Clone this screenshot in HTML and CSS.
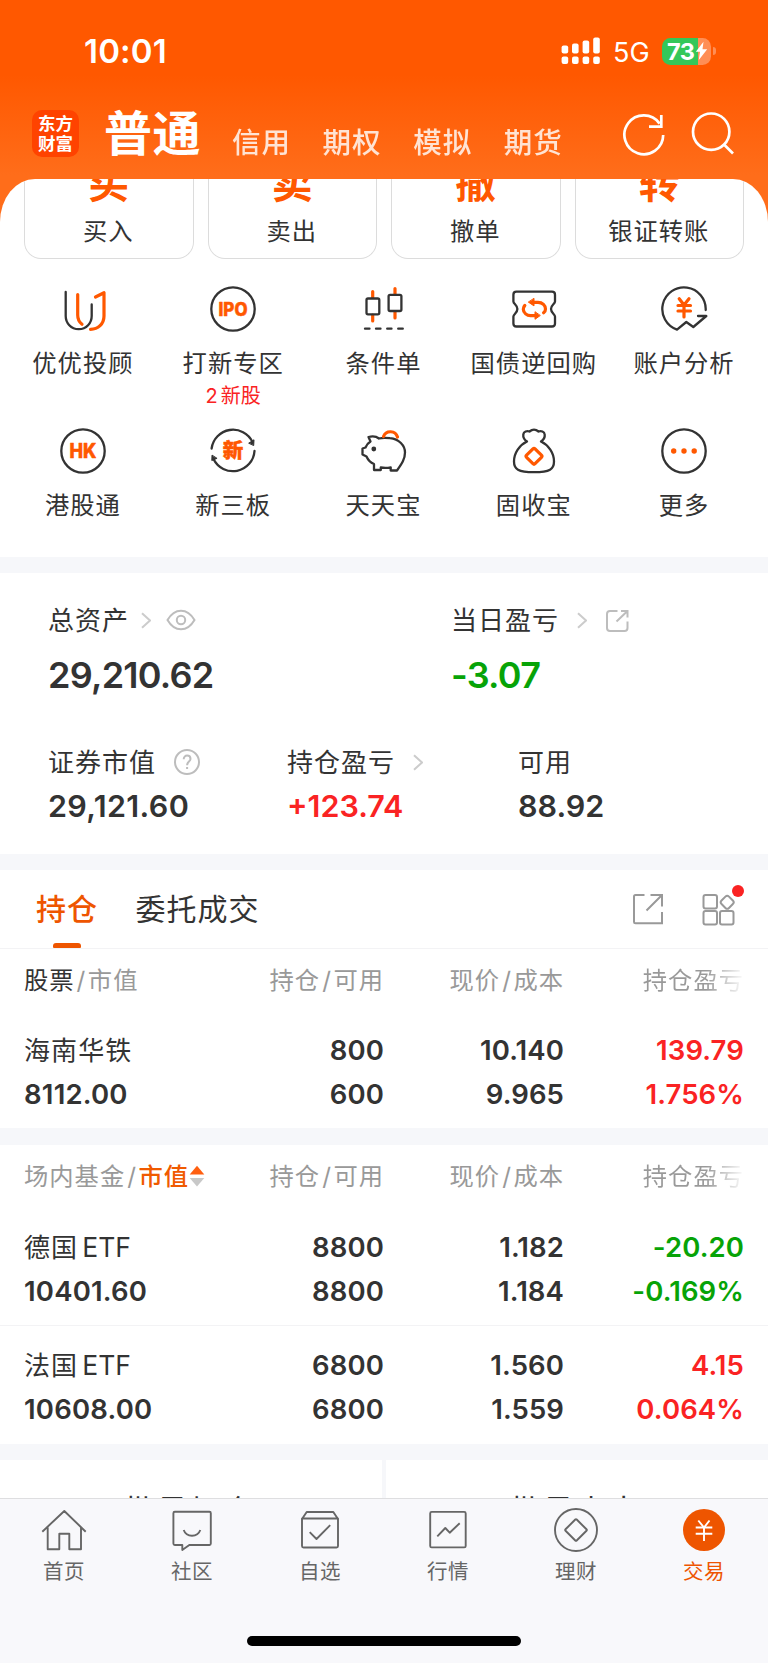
FILE: index.html
```html
<!DOCTYPE html>
<html lang="zh-CN">
<head>
<meta charset="utf-8">
<title>交易</title>
<link rel="stylesheet" href="styles.css">
</head>
<body>
<div class="app">
  <header class="top">
    <div class="status">
      <span class="time">10:01</span>
      <svg class="signal" width="40" height="28" viewBox="0 0 40 28" fill="#fff"><rect x="0.6" y="8.5" width="6.6" height="8" rx="2"/><rect x="11" y="6.500" width="6.600" height="10" rx="2"/><rect x="21.600" y="3.500" width="6.600" height="13" rx="2"/><rect x="32.200" y="0.500" width="6.600" height="16" rx="2"/><rect x="0.600" y="19.600" width="6.600" height="7.400" rx="2"/><rect x="11" y="19.600" width="6.600" height="7.400" rx="2"/><rect x="21.600" y="19.600" width="6.600" height="7.400" rx="2"/><rect x="32.200" y="19.600" width="6.600" height="7.400" rx="2"/></svg>
      <span class="net">5G</span>
      <span class="battery"><span class="pct">73</span><svg width="13" height="20" viewBox="0 0 13 20"><path d="M8.500 0.800L0.800 10.800H5L3.800 19L12.200 8.200H7.500Z" fill="#fff"/></svg></span><span class="battery-tip"></span>
    </div>
    <nav class="accounts">
      <span class="logo"><span>东方</span><span>财富</span></span>
      <span class="account-on">普通</span>
      <span class="account">信用</span><span class="account">期权</span><span class="account">模拟</span><span class="account">期货</span>
      <svg class="refresh" width="46" height="46" viewBox="0 0 46 46" fill="none" stroke="#fff" stroke-width="2.700"><path d="M42.200 23A19.400 19.400 0 1 1 38.600 11.600M40.300 3V14.700H28"/></svg>
      <svg width="46" height="46" viewBox="0 0 46 46" fill="none" stroke="#fff" stroke-width="2.700"><circle cx="21.200" cy="19.700" r="18.200"/><path d="M33.500 32L43 41.500"/></svg>
    </nav>
  </header>

  <main class="sheet">
    <section class="cards">
      <div class="card"><b>买</b><span>买入</span></div>
      <div class="card"><b>卖</b><span>卖出</span></div>
      <div class="card"><b>撤</b><span>撤单</span></div>
      <div class="card"><b>转</b><span>银证转账</span></div>
    </section>

    <section class="tools">
      <div class="tool">
        <svg class="ico" viewBox="0 0 48 48"><path d="M6.700 7V31C6.700 38 12 44.200 19.700 44.200S32.700 38 32.700 31V19.500"/><g class="o"><path d="M18.700 9.500V30C18.700 34.500 20 37 23 39.300M36.500 12L45 7.700V31C45 39 39 44.300 31.500 44.300"/></g></svg>
        <span>优优投顾</span></div>
      <div class="tool">
        <svg class="ico" viewBox="0 0 48 48"><circle cx="24" cy="24" r="21.700"/><text class="word" x="24" y="30.700" font-size="18.600" textLength="29" lengthAdjust="spacingAndGlyphs">IPO</text></svg>
        <span>打新专区</span><em><i>2</i>新股</em></div>
      <div class="tool">
        <svg class="ico" viewBox="0 0 48 48"><g class="o"><path d="M13.700 6.500V12.500M13.700 30V36M36 3.500V9M36 27V33"/></g><rect x="7.500" y="13.500" width="12.800" height="15.800" rx="1.500"/><rect x="29.600" y="9.800" width="12.800" height="16.200" rx="1.500"/><path d="M6 43.700H10.500M17 43.700H21.500M28.200 43.700H32.500M39.200 43.700H43.800"/></svg>
        <span>条件单</span></div>
      <div class="tool">
        <svg class="ico" viewBox="0 0 48 48"><path d="M6.400 6.700H42Q45 6.700 45 9.700V16.500C45 19 41 20 41 24S45 29 45 31.500V38.500Q45 41.500 42 41.500H6.400Q3.400 41.500 3.400 38.500V31.500C3.400 29 7.400 28 7.400 24S3.400 19 3.400 16.500V9.700Q3.400 6.700 6.400 6.700Z"/><g class="o"><path d="M22 17.300H28C32.500 17.300 35.500 20.500 35.500 24Q35.500 26.300 33.600 27.800M14.800 20.500Q13.300 22 13.300 24.300C13.300 28 17 30.700 20.500 30.700H26"/><path class="of" d="M24 13.700V20.900L18.600 17.300ZM25 27.100V34.300L30 30.700Z"/></g></svg>
        <span>国债逆回购</span></div>
      <div class="tool">
        <svg class="ico" viewBox="0 0 48 48"><path d="M45.700 25A21.700 21.700 0 1 0 17 44.600L26.300 37L33.300 42L46.300 31H38"/><g class="o"><path d="M19.200 13.700L24 20L29 13.700M24 20V32M18 20.500H30.500M18 26H30.500"/></g></svg>
        <span>账户分析</span></div>
      <div class="tool">
        <svg class="ico" viewBox="0 0 48 48"><circle cx="24" cy="24" r="21.700"/><text class="word" x="24" y="31" font-size="19.500" textLength="27" lengthAdjust="spacingAndGlyphs">HK</text></svg>
        <span>港股通</span></div>
      <div class="tool">
        <svg class="ico" viewBox="0 0 48 48"><path d="M2.600 21.500A21.600 21.600 0 0 1 43.500 15M45.500 24A21.600 21.600 0 0 1 4.500 32"/><path class="df" d="M40 16L45 12.800L44.700 18.200ZM3 28.500L2.800 33.500L7.700 31.500Z"/><text class="word" x="24" y="31.400" font-size="20.500">新</text></svg>
        <span>新三板</span></div>
      <div class="tool">
        <svg class="ico" viewBox="0 0 48 48"><path d="M9.500 10C13 9 17.500 9.500 20 11.500C23 10.700 27 10.700 31 11.200C40 12 46 18.500 46 25.500C46 32 43 36.500 38 43.500H31.700V40.300C28.500 41 25 41 21.800 40.500V43H15V37C11.500 35.500 9 33 7.500 29.500L3.500 27.500V21.500L6.500 20.500C7.500 18 9 16 11.500 14.500Z"/><circle cx="14.800" cy="22" r="2.400" class="df0"/><g class="o"><path d="M24.500 9.500A7.400 7.400 0 0 1 38.500 10"/></g></svg>
        <span>天天宝</span></div>
      <div class="tool">
        <svg class="ico" viewBox="0 0 48 48"><path d="M17 14.500C14 12.500 13 10 13.300 7.500C13.600 4.500 17 3.500 19.500 4.500Q21.700 2.700 24 2.700T28.500 4.500C31 3.500 34.400 4.500 34.700 7.500C35 10 34 12.500 31 14.500C38.500 18 44 26 44 34.500C44 42 40 45.200 24 45.200S4 42 4 34.500C4 26 9.500 18 17 14.500Z"/><g class="o"><rect x="18" y="23.300" width="12" height="12" rx="1.500" transform="rotate(45 24 29.300)"/></g></svg>
        <span>固收宝</span></div>
      <div class="tool">
        <svg class="ico" viewBox="0 0 48 48"><circle cx="24" cy="24" r="21.700"/><g class="dots"><circle cx="13.700" cy="24" r="2.700"/><circle cx="24" cy="24" r="2.700"/><circle cx="34.200" cy="24" r="2.700"/></g></svg>
        <span>更多</span></div>
    </section>

    <section class="assets">
      <div class="line main-line">
        <div class="asset">
          <div class="label">总资产<svg class="chev" viewBox="0 0 10 17"><path d="M1 1.200L9 8.500L1 15.800"/></svg><svg class="eye" viewBox="0 0 30 22"><path d="M1.500 11C5 5 9.500 1.700 15 1.700S25 5 28.500 11C25 17 20.500 20.300 15 20.300S5 17 1.500 11Z"/><circle cx="15" cy="11" r="4.200"/></svg></div>
          <div class="big">29,210.62</div>
        </div>
        <div class="asset">
          <div class="label">当日盈亏<svg class="chev wide" viewBox="0 0 10 17"><path d="M1 1.200L9 8.500L1 15.800"/></svg><svg class="share" viewBox="0 0 24 24"><path d="M12.500 2H5Q2 2 2 5V19Q2 22 5 22H19.500Q22.500 22 22.500 19V12.500M16 2H22.500V8.500M22.500 2L11.500 12.500"/></svg></div>
          <div class="big green">-3.07</div>
        </div>
      </div>
      <div class="line sub-line">
        <div class="asset">
          <div class="label">证券市值<svg class="help" viewBox="0 0 26 26"><circle cx="13" cy="13" r="12"/><path d="M9.700 10.300C9.700 8 11.200 6.600 13.100 6.600S16.500 8 16.500 10C16.500 12.500 13.100 12.800 13.100 16.200M13.100 18V20"/></svg></div>
          <div class="mid spaced">29,121.60</div>
        </div>
        <div class="asset">
          <div class="label">持仓盈亏<svg class="chev wide" viewBox="0 0 10 17"><path d="M1 1.200L9 8.500L1 15.800"/></svg></div>
          <div class="mid red">+123.74</div>
        </div>
        <div class="asset">
          <div class="label">可用</div>
          <div class="mid">88.92</div>
        </div>
      </div>
    </section>

    <section class="holdings">
      <div class="tabs">
        <span class="tab on">持仓</span><span class="tab">委托成交</span>
        <svg class="open" viewBox="0 0 32 32"><path d="M12.500 2H3.500Q2 2 2 3.500V29Q2 30.300 3.500 30.300H30V19M18.500 2H30V13.500M30 2L14.500 17.500"/></svg>
        <span class="grid-btn"><svg viewBox="0 0 34 34"><rect x="1.500" y="2" width="13.500" height="13.500" rx="2"/><rect x="1.500" y="18" width="13.500" height="13.500" rx="2"/><rect x="18" y="18" width="13.500" height="13.500" rx="2"/><rect x="20" y="4" width="10.500" height="10.500" rx="2.500" transform="rotate(45 25.200 9.200)"/></svg><i class="dot"></i></span>
      </div>
      <div class="thead"><span><strong>股票</strong><u>/</u>市值</span><span>持仓<u>/</u>可用</span><span>现价<u>/</u>成本</span><span class="fade">持仓盈亏</span></div>
      <div class="row">
        <div><span class="name">海南华铁</span><span>8112.00</span></div>
        <div><span>800</span><span>600</span></div>
        <div><span>10.140</span><span>9.965</span></div>
        <div class="red"><span>139.79</span><span>1.756%</span></div>
      </div>
    </section>

    <section class="holdings funds">
      <div class="thead"><span>场内基金<u>/</u><strong class="sorted">市值</strong><svg class="sort" viewBox="0 0 16 22"><path d="M8 0.800L15.300 9.500H0.700Z" fill="#ff5f10"/><path d="M8 21.500L15.300 13H0.700Z" fill="#c8c8c8"/></svg></span><span>持仓<u>/</u>可用</span><span>现价<u>/</u>成本</span><span class="fade">持仓盈亏</span></div>
      <div class="row">
        <div><span class="name">德国<i>ETF</i></span><span>10401.60</span></div>
        <div><span>8800</span><span>8800</span></div>
        <div><span>1.182</span><span>1.184</span></div>
        <div class="green"><span>-20.20</span><span>-0.169%</span></div>
      </div>
      <div class="row">
        <div><span class="name">法国<i>ETF</i></span><span>10608.00</span></div>
        <div><span>6800</span><span>6800</span></div>
        <div><span>1.560</span><span>1.559</span></div>
        <div class="red"><span>4.15</span><span>0.064%</span></div>
      </div>
    </section>

    <section class="batch"><span>批量加仓</span><span>批量卖出</span></section>
  </main>

  <footer class="bar">
    <nav class="bar-items">
      <div class="item"><svg viewBox="0 0 48 48"><path d="M2.300 25.700L24.300 5L45.700 25.700M7.700 21.500V43.300H19.300V27.700H29.300V43.300H41V21.500"/></svg><span>首页</span></div>
      <div class="item"><svg viewBox="0 0 48 48"><path d="M6.800 5.800H41.500Q42.800 5.800 42.800 7.300V37.500Q42.800 39 41.500 39H21.300L14.300 44V39H6.800Q5.400 39 5.400 37.500V7.300Q5.400 5.800 6.800 5.800ZM15.700 24C18.500 31.700 29.500 31.700 32.300 24"/></svg><span>社区</span></div>
      <div class="item"><svg viewBox="0 0 48 48"><path d="M6 13L10.700 6H37.300L42 13M6 12.500H42V40Q42 41.500 40.500 41.500H7.500Q6 41.500 6 40ZM13.700 26.200L20.500 33L34.200 19.200"/></svg><span>自选</span></div>
      <div class="item"><svg viewBox="0 0 48 48"><rect x="6.200" y="5.900" width="35.500" height="35.500" rx="1.500"/><path d="M13.300 30.400L21.300 22L25.700 26.700L35.700 17.200"/></svg><span>行情</span></div>
      <div class="item"><svg viewBox="0 0 48 48"><circle cx="24" cy="24" r="21"/><rect x="16.100" y="16.100" width="15.800" height="15.800" rx="1" transform="rotate(45 24 24)"/></svg><span>理财</span></div>
      <div class="item active"><svg viewBox="0 0 48 48"><circle cx="24" cy="24" r="21" fill="#ee5500" stroke="none"/><path stroke="#fff" d="M18.300 14.500L24 21.500L29.500 14.500M24 21.500V35M15.700 21.500H32.300M15.700 27.800H32.300"/></svg><span>交易</span></div>
    </nav>
    <div class="home-bar"></div>
  </footer>
</div>
</body>
</html>
```
FILE: styles.css
```css
* { box-sizing: border-box; }
body { margin: 0; }
i, em, u { font-style: normal; text-decoration: none; }
svg { display: block; flex: none; }

.app {
  width: 768px;
  height: 1663px;
  overflow: hidden;
  display: flex;
  flex-direction: column;
  font-family: Inter, "Noto Sans CJK SC", sans-serif;
  font-size: 24.300px;
  letter-spacing: 1px;
  color: #333;
  background: linear-gradient(#ff5800 0, #ff5800 75px, #ff6d1a 175px, #ff6d1a 230px, #fff 231px);
}
.red { color: #fa2323; }
.green { color: #07a307; }

/* status bar and account switcher */
.top { height: 179px; flex: none; color: #fff; }
.status { height: 103px; display: flex; padding-left: 84px; }
.time { width: 477px; line-height: 103px; font-size: 33px; font-weight: 600; letter-spacing: 0.200px; }
.signal { margin-top: 37px; }
.net { margin-left: 12px; width: 49px; line-height: 105px; font-size: 27px; font-weight: 400; letter-spacing: 0; }
.battery {
  width: 49px; height: 27px; margin-top: 37.500px;
  border-radius: 8.500px;
  display: flex; align-items: center;
  padding-left: 5px;
  background: linear-gradient(90deg, #34c759 36px, #ff8e55 36px);
}
.pct { font-size: 23.500px; font-weight: 700; line-height: 27px; letter-spacing: -0.500px; width: 28px; }
.battery-tip { width: 3px; height: 8px; margin: 47px 0 0 2px; border-radius: 0 3px 3px 0; background: #ff8e55; }
.accounts { height: 76px; display: flex; padding-left: 32px; }
.logo {
  width: 47px; height: 47px; margin-top: 7px;
  border-radius: 10px; background: #ff4300;
  display: flex; flex-direction: column; align-items: center; justify-content: center;
  font-size: 17.500px; line-height: 20px; font-weight: 700; letter-spacing: 0;
}
.account-on { margin-left: 25px; width: 128px; font-size: 48px; line-height: 62px; font-weight: 700; letter-spacing: 0.500px; }
.account { width: 90.600px; line-height: 79px; font-size: 28.500px; font-weight: 500; letter-spacing: 1px; opacity: 0.82; }
.refresh { margin-left: 27px; margin-right: 22.500px; }
.accounts > svg { margin-top: 9px; }

/* white content sheet */
.sheet {
  height: 1319px; flex: none;
  overflow: hidden;
  border-radius: 35px 35px 0 0 / 43px 43px 0 0;
  background: #fff;
}
.cards { display: grid; grid-template-columns: repeat(4, 1fr); gap: 14px; padding: 0 24px; height: 80px; }
.card {
  overflow: hidden;
  border: 1.500px solid #dcdcdc; border-top: 0;
  border-radius: 0 0 17px 17px;
  display: flex; flex-direction: column; align-items: center;
}
.card b { margin-top: -16px; font-size: 41px; line-height: 41px; color: #ff5800; letter-spacing: 0; }
.card span { margin-top: 12px; line-height: 30px; margin-left: -1px; }

.tools {
  display: grid; grid-template-columns: repeat(5, 150.300px); grid-template-rows: 142px 1fr;
  justify-content: center;
  height: 298px; padding: 25.500px 1px 0 0;
}
.tool { display: flex; flex-direction: column; align-items: center; }
.tool span { margin-top: 15px; line-height: 30px; white-space: nowrap; }
.tool em { font-size: 20px; line-height: 26px; margin-top: 5px; color: #fa2323; letter-spacing: 0; }
.tool em i { margin-right: 3px; }
.ico { width: 48px; height: 48px; fill: none; stroke: #333; stroke-width: 2.300; stroke-linecap: round; stroke-linejoin: round; }
.ico .o { stroke: #ff5800; stroke-width: 3.200; }
.ico .of { fill: #ff5800; stroke-width: 1; }
.ico .df { fill: #333; stroke-width: 1; }
.ico .df0 { fill: #333; stroke: none; }
.ico .dots { fill: #ff5800; stroke: none; }
.word { fill: #ff5800; stroke: #ff5800; stroke-width: 0.500; font-weight: 800; text-anchor: middle; letter-spacing: 0; }

/* asset summary */
.assets { height: 313px; border: solid #f6f7fa; border-width: 16px 0; padding: 30px 48px 0; }
.line { display: grid; }
.main-line { grid-template-columns: 403px 1fr; height: 142px; }
.sub-line { grid-template-columns: 239px 231px 1fr; }
.label { display: flex; align-items: center; font-size: 26px; letter-spacing: 1px; line-height: 35px; height: 34px; }
.label svg { fill: none; stroke: #bdbdbd; stroke-width: 2; }
.label .chev { width: 10px; height: 17px; margin-left: 12px; stroke: #ccc; }
.label .chev.wide { margin-left: 17.500px; }
.eye { width: 30px; height: 22px; margin-left: 15px; }
.share { width: 24px; height: 24px; margin-left: 18px; margin-top: 2px; }
.help { width: 26px; height: 26px; margin-left: 18px; stroke-width: 1.700; }
.big { font-size: 36px; font-weight: 600; line-height: 44px; margin-top: 16px; letter-spacing: -0.750px; }
.mid { font-size: 30.500px; font-weight: 600; line-height: 40px; margin-top: 7px; letter-spacing: 0; }
.mid.spaced { letter-spacing: 0.350px; }

/* holdings */
.tabs { height: 79px; display: flex; padding: 0 23px 0 36px; border-bottom: 1.500px solid #f3f3f5; }
.tab { font-size: 30px; line-height: 78px; }
.tab.on { position: relative; width: 99.500px; color: #ee5500; font-weight: 500; }
.tab.on::after { content: ""; position: absolute; left: 17px; bottom: 0; width: 28px; height: 5.500px; border-radius: 3px 3px 1px 1px; background: #ee5500; }
.open, .grid-btn svg { fill: none; stroke: #999; stroke-width: 2; }
.open { width: 32px; height: 32px; margin: 23px 38px 0 auto; }
.grid-btn { position: relative; width: 43px; }
.grid-btn svg { width: 34px; height: 34px; margin-top: 23px; }
.dot { position: absolute; left: 30px; top: 15px; width: 12px; height: 12px; border-radius: 50%; background: #fa2323; }
.thead, .row { display: grid; grid-template-columns: 180px 180px 180px 180px; padding: 0 24px; }
.thead { height: 65px; line-height: 63px; color: #999; white-space: nowrap; }
.thead span { text-align: right; }
.thead span:first-child { text-align: left; display: flex; align-items: center; height: 62px; line-height: 62px; }
.thead u { margin: 0 2.500px 0 2px; letter-spacing: 0; }
.thead strong { font-weight: 400; color: #333; }
.thead .sorted { color: #f05a00; font-weight: 500; }
.sort { width: 16px; height: 22px; margin-left: 0; }
.thead .fade { color: transparent; background: linear-gradient(90deg, #999 142px, #fff 181px); -webkit-background-clip: text; background-clip: text; }
.row { height: 114px; padding-top: 14px; font-size: 27.500px; font-weight: 600; letter-spacing: 0.100px; }
.row div { display: flex; flex-direction: column; text-align: right; }
.row div:first-child { text-align: left; letter-spacing: 0.200px; }
.row span { line-height: 44px; }
.row .name { font-size: 26px; font-weight: 400; letter-spacing: 1.100px; line-height: 45px; height: 44px; }
.name i { margin-left: 4px; font-size: 26.500px; letter-spacing: 0; }
.funds { border: solid #f6f7fa; border-width: 17px 0 16px; height: 332px; }
.funds .thead { height: 66px; line-height: 63px; }
.funds .row { height: 114px; }
.funds .row + .row { height: 118px; padding-top: 17px; border-top: 1.500px solid #f3f3f5; }
.batch { display: grid; grid-template-columns: 1fr 1fr; gap: 4px; background: #f6f7fa; height: 60px; }
.batch span { background: #fff; text-align: center; font-size: 31px; line-height: 101px; height: 101px; letter-spacing: 1.800px; padding-right: 3px; }

/* bottom bar */
.bar { height: 165px; background: #f8f8fb; border-top: 1.500px solid #dedee0; flex: none; }
.bar-items { display: grid; grid-template-columns: repeat(6, 1fr); height: 137px; padding-top: 7px; }
.item { display: flex; flex-direction: column; align-items: center; color: #666; font-size: 20.500px; letter-spacing: 0.600px; }
.item svg { width: 48px; height: 48px; fill: none; stroke: #666; stroke-width: 1.900; stroke-linejoin: round; }
.item span { margin-top: 5px; line-height: 26px; }
.item.active { color: #ee5500; }
.home-bar { width: 274px; height: 10px; border-radius: 5px; background: #000; margin: 0 auto; }
```
